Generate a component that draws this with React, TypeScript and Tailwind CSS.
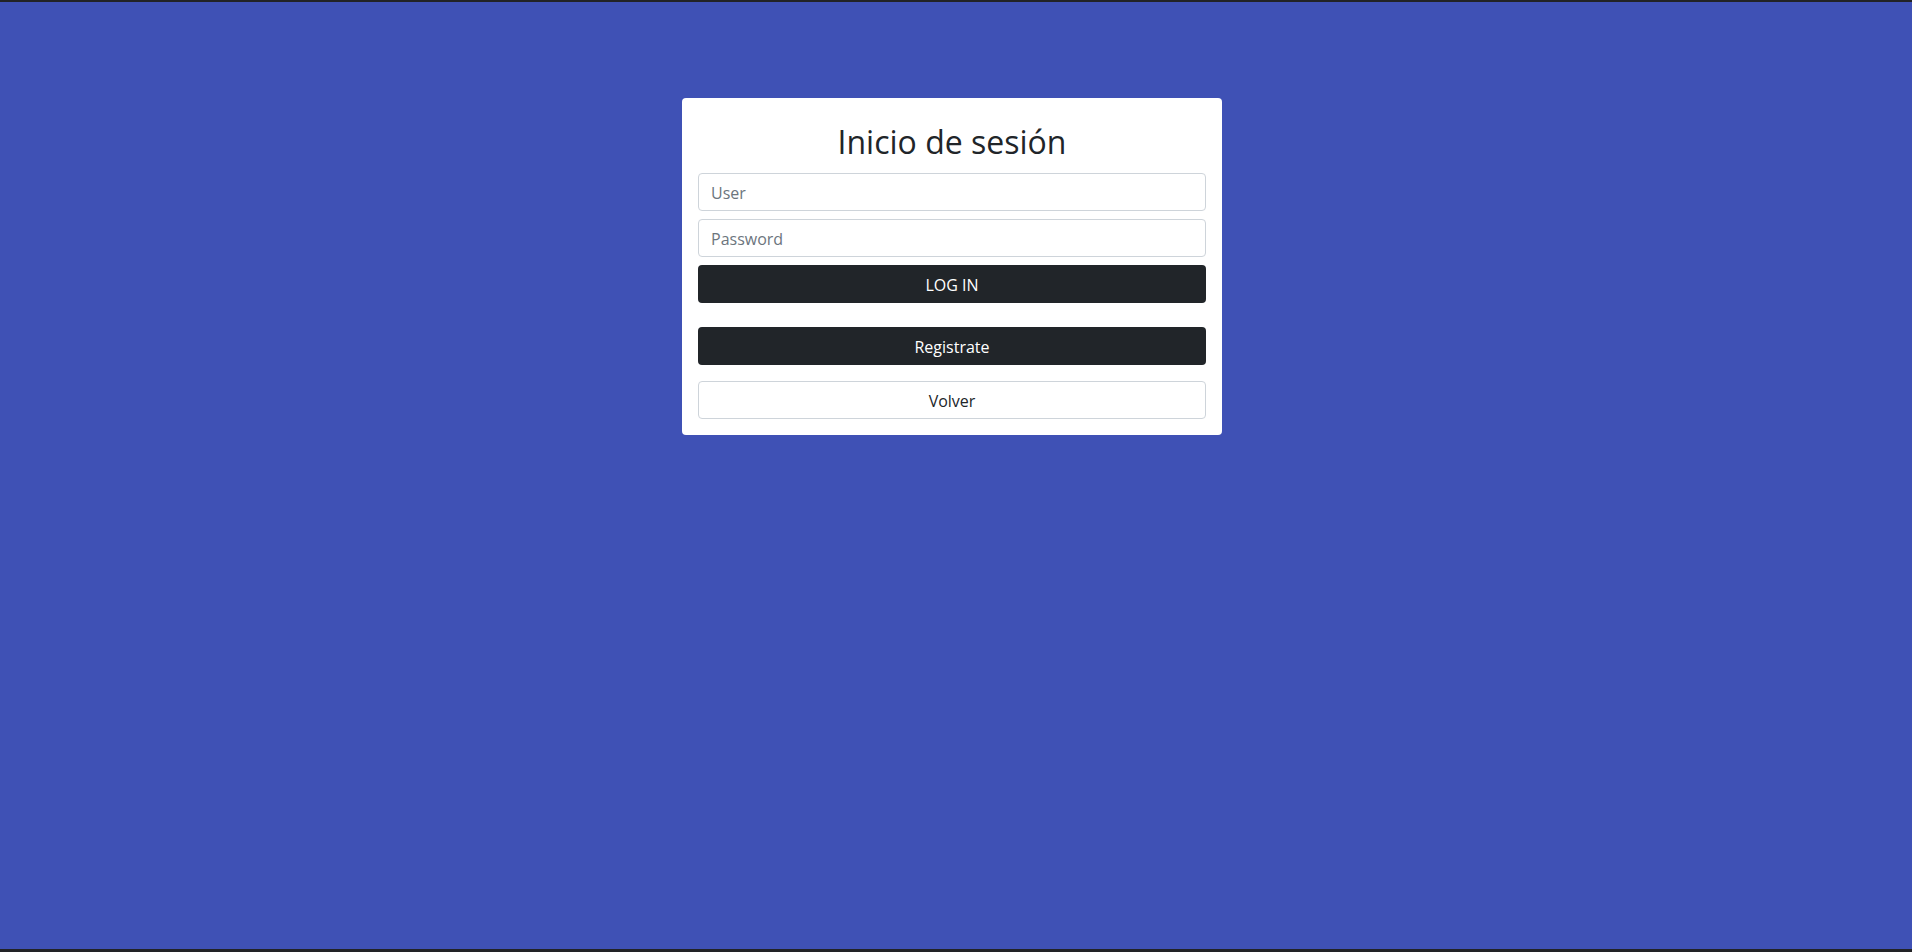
export default function App() {
  return (
    <div className="min-h-screen bg-[#3f51b5] border-t-2 border-b-[3px] border-[#222326] flex flex-col items-center pr-2 font-['Open_Sans',sans-serif] text-[#212529]">
      {/* Tarjeta de login */}
      <div className="mt-[96px] w-[540px] bg-white rounded-[4px] px-4 pt-[25px] pb-4">
        <h2 className="text-[32px] leading-[38px] text-center font-normal">Inicio de sesión</h2>

        <form className="mt-[12px] flex flex-col" onSubmit={(e) => e.preventDefault()}>
          <input
            type="text"
            placeholder="User"
            className="h-[38px] w-full border border-[#ced4da] rounded-[4px] px-3 pt-[2px] text-base placeholder-[#6c757d] focus:outline-none"
          />
          <input
            type="password"
            placeholder="Password"
            className="mt-2 h-[38px] w-full border border-[#ced4da] rounded-[4px] px-3 pt-[2px] text-base placeholder-[#6c757d] focus:outline-none"
          />
          <button className="mt-2 h-[38px] w-full bg-[#212529] text-white rounded-[4px] pt-[2px] text-base">LOG IN</button>
        </form>

        <button className="mt-6 h-[38px] w-full bg-[#212529] text-white rounded-[4px] pt-[2px] text-base">Registrate</button>
        <button className="mt-4 h-[38px] w-full bg-white border border-[#ced4da] rounded-[4px] pt-[2px] text-base text-[#212529]">Volver</button>
      </div>
    </div>
  );
}
